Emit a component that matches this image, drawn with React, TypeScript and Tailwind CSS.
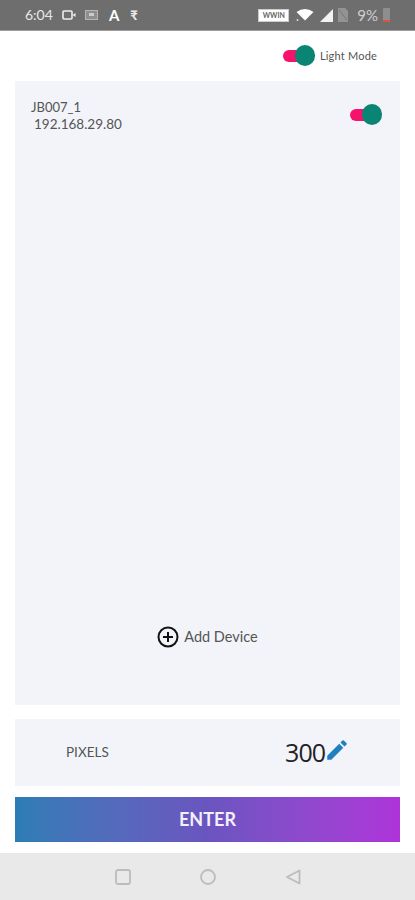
import React from 'react';

const Toggle = () => (
    <div className="relative w-[32px] h-[22px]">
        <div className="absolute left-0 top-[5px] w-[24px] h-[12px] rounded-full bg-[#f5136b]" />
        <div className="absolute right-0 top-0 w-[20px] h-[21px] rounded-full bg-[#0b8573]" />
    </div>
);

const StatusBar = () => (
    <div className="h-[31px] bg-[#6e6e6e] border-b border-[#9a9a9a] flex items-center pl-[25px] pr-[25px] text-[#e8e8e8]">
        <span className="text-[14px] leading-none mr-[9px]">6:04</span>
        <svg width="14" height="12" viewBox="0 0 14 12" className="mr-[9px]">
            <rect x="1" y="2" width="9" height="8" rx="1" fill="none" stroke="#eee" strokeWidth="1.6" />
            <path d="M10.5 6 L13.5 4 V8 Z" fill="#eee" />
        </svg>
        <svg width="13" height="10" viewBox="0 0 13 10" className="mr-[11px]">
            <rect x="0.5" y="0.5" width="12" height="9" fill="#8f8f8f" stroke="#b5b5b5" />
            <rect x="4" y="3" width="5" height="3" fill="#ccc" />
        </svg>
        <span className="text-[15px] leading-none font-bold text-white mr-[11px]">A</span>
        <span className="text-[13px] leading-none font-bold text-[#eee]">₹</span>
        <div className="ml-auto flex items-center">
            <div className="w-[31px] h-[13px] bg-white border border-[#ccc] text-[#666] text-[7px] leading-none font-bold flex items-center justify-center mr-[7px]">WWIN</div>
            <svg width="18" height="14" viewBox="0 0 18 14" className="mr-[5px]">
                <path d="M0.5 4 Q9 -2 17.5 4 L9 12.5 Z" fill="#fff" />
                <circle cx="1.5" cy="12" r="1" fill="#ddd" />
            </svg>
            <svg width="15" height="15" viewBox="0 0 15 15" className="mr-[4px]">
                <path d="M14 1 V14 H1 Z" fill="#f2f2f2" />
            </svg>
            <svg width="10" height="14" viewBox="0 0 10 14" className="mr-[9px]">
                <path d="M0 0 H7 L10 3 V14 H0 Z" fill="#939393" />
                <path d="M1 2 L9 12" stroke="#777" strokeWidth="1" />
            </svg>
            <span className="text-[15px] leading-none text-[#cfcfcf] mr-[5px]">9%</span>
            <div className="relative w-[7px] h-[14px] bg-[#8e8e8e] rounded-[1px]">
                <div className="absolute left-0 right-0 bottom-0 h-[2px] bg-[#e0523f]" />
            </div>
        </div>
    </div>
);

export default function App() {
    return (
        <div className="w-[415px] h-[900px] bg-white flex flex-col overflow-hidden font-['Lato',sans-serif]">
            <StatusBar />

            <main className="flex-1 flex flex-col px-[15px]">
                <div className="h-[50px] flex items-center justify-end pr-[23px] gap-[5px]">
                    <Toggle />
                    <span className="text-[11px] text-[#555] tracking-[0.2px]">Light Mode</span>
                </div>

                <section className="h-[624px] bg-[#f2f4f9] flex flex-col">
                    <div className="flex justify-between pl-[16px] pr-[18px] pt-[18px]">
                        <div className="text-[13px] leading-[17px] text-[#555]">
                            <div>JB007_1</div>
                            <div className="pl-[3px] text-[13.5px]">192.168.29.80</div>
                        </div>
                        <div className="mt-[5px]"><Toggle /></div>
                    </div>
                    <div className="mt-auto mb-[57px] flex items-center justify-center gap-[5px]">
                        <svg width="22" height="22" viewBox="0 0 22 22" fill="none" stroke="#111" strokeWidth="2">
                            <circle cx="11" cy="11" r="9.5" />
                            <path d="M11 6 V16 M6 11 H16" />
                        </svg>
                        <span className="text-[14.5px] text-[#555]">Add Device</span>
                    </div>
                </section>

                <section className="mt-[14px] h-[67px] bg-[#f2f4f9] flex items-center pl-[51px] pr-[50px]">
                    <span className="text-[13.5px] text-[#555]">PIXELS</span>
                    <span className="ml-auto text-[25px] leading-none font-normal text-[#222] font-['Open_Sans',sans-serif] tracking-[-1px]">300</span>
                    <svg width="26" height="26" viewBox="0 0 24 24" className="mb-[5px] -ml-[1px]" fill="#1f7fc0">
                        <path d="M3 17.25V21h3.75L17.81 9.94l-3.75-3.75L3 17.25zM20.71 7.04a1 1 0 0 0 0-1.41l-2.34-2.34a1 1 0 0 0-1.41 0l-1.83 1.83 3.75 3.75 1.83-1.83z" />
                    </svg>
                </section>

                <button className="mt-[11px] h-[45px] bg-gradient-to-r from-[#2a7db6] via-[#6a55c0] to-[#ae33d9] text-[#f4f0fb] text-[18px] font-bold flex items-center justify-center">
                    ENTER
                </button>
            </main>

            <nav className="h-[47px] bg-[#e9e9e9] flex items-center justify-center gap-[69px]">
                <svg width="16" height="16" viewBox="0 0 16 16" fill="none" stroke="#bcbcbc" strokeWidth="1.8">
                    <rect x="1" y="1" width="14" height="14" rx="2" />
                </svg>
                <svg width="16" height="16" viewBox="0 0 16 16" fill="none" stroke="#bcbcbc" strokeWidth="1.8">
                    <circle cx="8" cy="8" r="7" />
                </svg>
                <svg width="16" height="16" viewBox="0 0 16 16" fill="none" stroke="#bcbcbc" strokeWidth="1.8">
                    <path d="M14.5 1.5 V14.5 L2 8 Z" strokeLinejoin="round" />
                </svg>
            </nav>
        </div>
    );
}
